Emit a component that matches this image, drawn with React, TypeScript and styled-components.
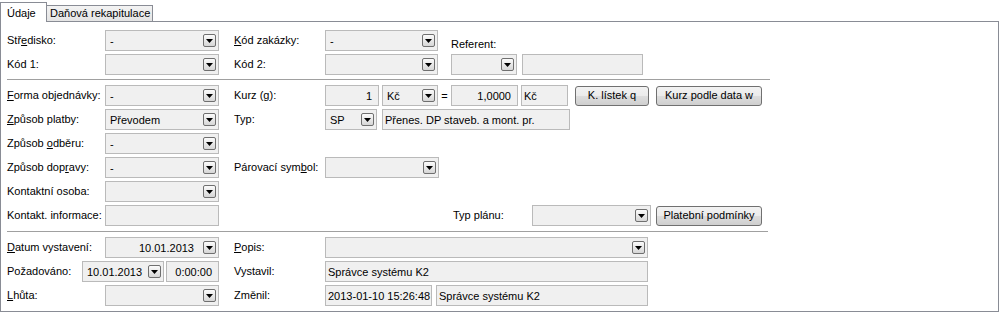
import React from "react";
import styled, { createGlobalStyle } from "styled-components";

const Global = createGlobalStyle`
  html, body { margin: 0; padding: 0; background: #fff; }
  body {
    font-family: "Liberation Sans", Arial, sans-serif;
    font-size: 11px;
    color: #000;
  }
`;

const Window = styled.div`
  width: 1000px;
  height: 312px;
  overflow: hidden;
`;

const TabBar = styled.div`
  display: flex;
  align-items: flex-end;
  height: 21px;
`;

const Tab = styled.div<{ $active?: boolean; $w: number }>`
  box-sizing: border-box;
  flex: none;
  width: ${(p) => p.$w}px;
  height: ${(p) => (p.$active ? 20 : 16)}px;
  margin-bottom: ${(p) => (p.$active ? -1 : 0)}px;
  position: relative;
  z-index: ${(p) => (p.$active ? 2 : 1)};
  border-top: 1px solid #898c95;
  border-right: 1px solid #898c95;
  border-left: ${(p) => (p.$active ? "1px solid #898c95" : "none")};
  background: ${(p) => (p.$active ? "#fff" : "linear-gradient(#f3f3f3, #e4e4e4)")};
  display: flex;
  align-items: center;
  padding-left: ${(p) => (p.$active ? 6 : 3)}px;
  padding-top: ${(p) => (p.$active ? 1 : 0)}px;
  white-space: nowrap;
  line-height: 13px;
`;

const Panel = styled.div`
  box-sizing: border-box;
  width: 999px;
  height: 291px;
  border: 1px solid #898c95;
  background: #fff;
  padding: 8px 0 0 6px;
  display: flex;
  flex-direction: column;
`;

const Section = styled.div`
  display: flex;
  flex-direction: column;
  gap: 3px;
`;

const Rule = styled.div<{ $w: number; $top: number; $bottom: number }>`
  width: ${(p) => p.$w}px;
  height: 1px;
  background: #a0a0a0;
  margin: ${(p) => p.$top}px 0 ${(p) => p.$bottom}px 0;
`;

const Row = styled.div`
  display: flex;
  align-items: center;
  height: 21px;
`;

const Label = styled.span<{ $w: number; $ml?: number; $bottom?: boolean }>`
  flex: none;
  width: ${(p) => p.$w}px;
  margin-left: ${(p) => p.$ml ?? 0}px;
  white-space: nowrap;
  line-height: 13px;
  align-self: ${(p) => (p.$bottom ? "flex-end" : "center")};
`;

const Combo = styled.div<{ $w: number; $ml?: number }>`
  box-sizing: border-box;
  flex: none;
  width: ${(p) => p.$w}px;
  height: 21px;
  margin-left: ${(p) => p.$ml ?? 0}px;
  border: 1px solid #bababa;
  background: #f0f0f0;
  padding: 0 2px 0 4px;
  display: flex;
  align-items: center;
`;

const ComboText = styled.span<{ $right?: boolean }>`
  flex: 1;
  min-width: 0;
  overflow: hidden;
  white-space: nowrap;
  text-align: ${(p) => (p.$right ? "right" : "left")};
  padding-right: ${(p) => (p.$right ? 9 : 0)}px;
`;

const DropBtn = styled.span`
  box-sizing: border-box;
  flex: none;
  width: 13px;
  height: 13px;
  border: 1px solid #6f6f6f;
  border-radius: 2px;
  background: linear-gradient(#fbfbfb, #d6d6d6);
  display: flex;
  align-items: center;
  justify-content: center;
`;

const Field = styled.div<{ $w: number; $ml?: number; $right?: boolean }>`
  box-sizing: border-box;
  flex: none;
  width: ${(p) => p.$w}px;
  height: 21px;
  margin-left: ${(p) => p.$ml ?? 0}px;
  border: 1px solid #bababa;
  background: #f0f0f0;
  padding: ${(p) => (p.$right ? "0 6px 0 2px" : "0 2px")};
  display: flex;
  align-items: center;
  justify-content: ${(p) => (p.$right ? "flex-end" : "flex-start")};
  white-space: nowrap;
  overflow: hidden;
`;

const Eq = styled.span`
  flex: none;
  width: 13px;
  text-align: center;
`;

const Btn = styled.button<{ $w: number; $ml?: number }>`
  box-sizing: border-box;
  flex: none;
  width: ${(p) => p.$w}px;
  height: 20px;
  margin-left: ${(p) => p.$ml ?? 0}px;
  padding: 0;
  border: 1px solid #707070;
  border-radius: 3px;
  background: linear-gradient(#f2f2f2 0%, #ebebeb 50%, #dddddd 51%, #cfcfcf 100%);
  font: inherit;
  color: #000;
  line-height: 13px;
`;

const Arrow = () => (
  <svg width="7" height="4" viewBox="0 0 7 4">
    <polygon points="0,0 7,0 3.5,4" fill="#000" />
  </svg>
);

const Dd = ({ w, ml, value, right }: { w: number; ml?: number; value?: string; right?: boolean }) => (
  <Combo $w={w} $ml={ml}>
    <ComboText $right={right}>{value ?? ""}</ComboText>
    <DropBtn>
      <Arrow />
    </DropBtn>
  </Combo>
);

export default function App() {
  return (
    <Window>
      <Global />
      <TabBar>
        <Tab $active $w={47}>Údaje</Tab>
        <Tab $w={106}>Daňová rekapitulace</Tab>
      </TabBar>
      <Panel>
        <Section>
          <Row>
            <Label $w={98}>Stř<u>e</u>disko:</Label>
            <Dd w={114} value="-" />
            <Label $w={91} $ml={15}><u>K</u>ód zakázky:</Label>
            <Dd w={113} value="-" />
            <Label $w={100} $ml={13} $bottom>Referent:</Label>
          </Row>
          <Row>
            <Label $w={98}>Kód 1:</Label>
            <Dd w={114} />
            <Label $w={91} $ml={15}>Kód 2:</Label>
            <Dd w={113} />
            <Dd w={66} ml={13} />
            <Field $w={121} $ml={5} />
          </Row>
        </Section>
        <Rule $w={763} $top={4} $bottom={5} />
        <Section>
          <Row>
            <Label $w={98}><u>F</u>orma objednávky:</Label>
            <Dd w={114} value="-" />
            <Label $w={91} $ml={15}>Kurz (<u>g</u>):</Label>
            <Field $w={54} $right>1</Field>
            <Dd w={56} ml={3} value="Kč" />
            <Eq>=</Eq>
            <Field $w={67} $right>1,0000</Field>
            <Field $w={47} $ml={3}>Kč</Field>
            <Btn $w={74} $ml={7}>K. lístek q</Btn>
            <Btn $w={106} $ml={7}>Kurz podle data w</Btn>
          </Row>
          <Row>
            <Label $w={98}><u>Z</u>působ platby:</Label>
            <Dd w={114} value="Převodem" />
            <Label $w={91} $ml={15}>Typ:</Label>
            <Dd w={52} value="SP" />
            <Field $w={188} $ml={5}>Přenes. DP staveb. a mont. pr.</Field>
          </Row>
          <Row>
            <Label $w={98}>Způsob <u>o</u>dběru:</Label>
            <Dd w={114} value="-" />
          </Row>
          <Row>
            <Label $w={98}>Způsob dop<u>r</u>avy:</Label>
            <Dd w={114} value="-" />
            <Label $w={91} $ml={15}>Párovací sym<u>b</u>ol:</Label>
            <Dd w={114} />
          </Row>
          <Row>
            <Label $w={98}>Kontaktní osoba:</Label>
            <Dd w={114} />
          </Row>
          <Row>
            <Label $w={98}>Kontakt. informace:</Label>
            <Field $w={114} />
            <Label $w={79} $ml={234}>Typ plánu:</Label>
            <Dd w={119} />
            <Btn $w={106} $ml={5}>Platební podmínky</Btn>
          </Row>
        </Section>
        <Rule $w={761} $top={5} $bottom={5} />
        <Section>
          <Row>
            <Label $w={98}><u>D</u>atum vystavení:</Label>
            <Dd w={114} value="10.01.2013" right />
            <Label $w={91} $ml={15}><u>P</u>opis:</Label>
            <Dd w={323} />
          </Row>
          <Row>
            <Label $w={75}>Požadováno:</Label>
            <Dd w={82} value="10.01.2013" />
            <Field $w={53} $ml={2} $right>0:00:00</Field>
            <Label $w={91} $ml={15}>Vystavil:</Label>
            <Field $w={323}>Správce systému K2</Field>
          </Row>
          <Row>
            <Label $w={98}><u>L</u>hůta:</Label>
            <Dd w={114} />
            <Label $w={91} $ml={15}>Změnil:</Label>
            <Field $w={107}>2013-01-10 15:26:48</Field>
            <Field $w={212} $ml={4}>Správce systému K2</Field>
          </Row>
        </Section>
      </Panel>
    </Window>
  );
}
